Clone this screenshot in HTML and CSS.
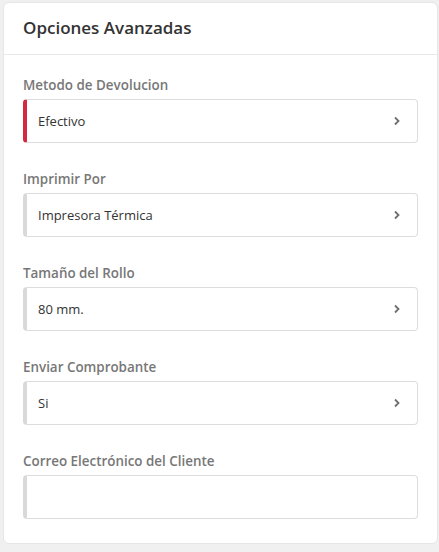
FILE: index.html
```html
<!DOCTYPE html>
<html lang="es">
<head>
<meta charset="utf-8">
<link rel="stylesheet" href="styles.css">
</head>
<body>
<div class="card">
  <div class="card-header">Opciones Avanzadas</div>
  <div class="card-body">
    <div class="group">
      <div class="label">Metodo de Devolucion</div>
      <div class="field active"><span>Efectivo</span><svg class="chev" width="8" height="10" viewBox="0 0 8 10"><path d="M2 1.5 L5.5 5 L2 8.5" fill="none" stroke="#6f6f6f" stroke-width="1.8"/></svg></div>
    </div>
    <div class="group">
      <div class="label">Imprimir Por</div>
      <div class="field"><span>Impresora Térmica</span><svg class="chev" width="8" height="10" viewBox="0 0 8 10"><path d="M2 1.5 L5.5 5 L2 8.5" fill="none" stroke="#6f6f6f" stroke-width="1.8"/></svg></div>
    </div>
    <div class="group">
      <div class="label">Tamaño del Rollo</div>
      <div class="field"><span>80 mm.</span><svg class="chev" width="8" height="10" viewBox="0 0 8 10"><path d="M2 1.5 L5.5 5 L2 8.5" fill="none" stroke="#6f6f6f" stroke-width="1.8"/></svg></div>
    </div>
    <div class="group">
      <div class="label">Enviar Comprobante</div>
      <div class="field"><span>Si</span><svg class="chev" width="8" height="10" viewBox="0 0 8 10"><path d="M2 1.5 L5.5 5 L2 8.5" fill="none" stroke="#6f6f6f" stroke-width="1.8"/></svg></div>
    </div>
    <div class="group">
      <div class="label">Correo Electrónico del Cliente</div>
      <div class="field"></div>
    </div>
  </div>
</div>
</body>
</html>
```
FILE: styles.css
```css
html, body {
  margin: 0;
  padding: 0;
}
body {
  background: #f0f0f0;
  font-family: "Open Sans", "Noto Sans", sans-serif;
  padding: 2px 1px 0 3px;
  height: 552px;
  box-sizing: border-box;
}
.card {
  background: #fff;
  border: 1px solid #e6e6e6;
  border-radius: 6px;
  width: 435px;
  box-sizing: border-box;
}
.card-header {
  padding: 13px 19px 14px;
  font-size: 17px;
  line-height: 24px;
  font-weight: 600;
  color: #333;
  border-bottom: 1px solid #e8e8e8;
}
.card-body {
  padding: 21px 19px 24px 19px;
  display: flex;
  flex-direction: column;
  gap: 27px;
}
.label {
  font-size: 13.4px;
  line-height: 18px;
  font-weight: 600;
  color: #777;
  margin-bottom: 5px;
}
.field {
  height: 44px;
  box-sizing: border-box;
  border: 1px solid #ddd;
  border-left: 4px solid #d9d9d9;
  border-radius: 4px;
  display: flex;
  align-items: center;
  justify-content: space-between;
  padding: 0 16px 0 11px;
  font-size: 13px;
  color: #333;
}
.field.active {
  border-left-color: #d3283f;
}
.chev {
  display: block;
}
```
